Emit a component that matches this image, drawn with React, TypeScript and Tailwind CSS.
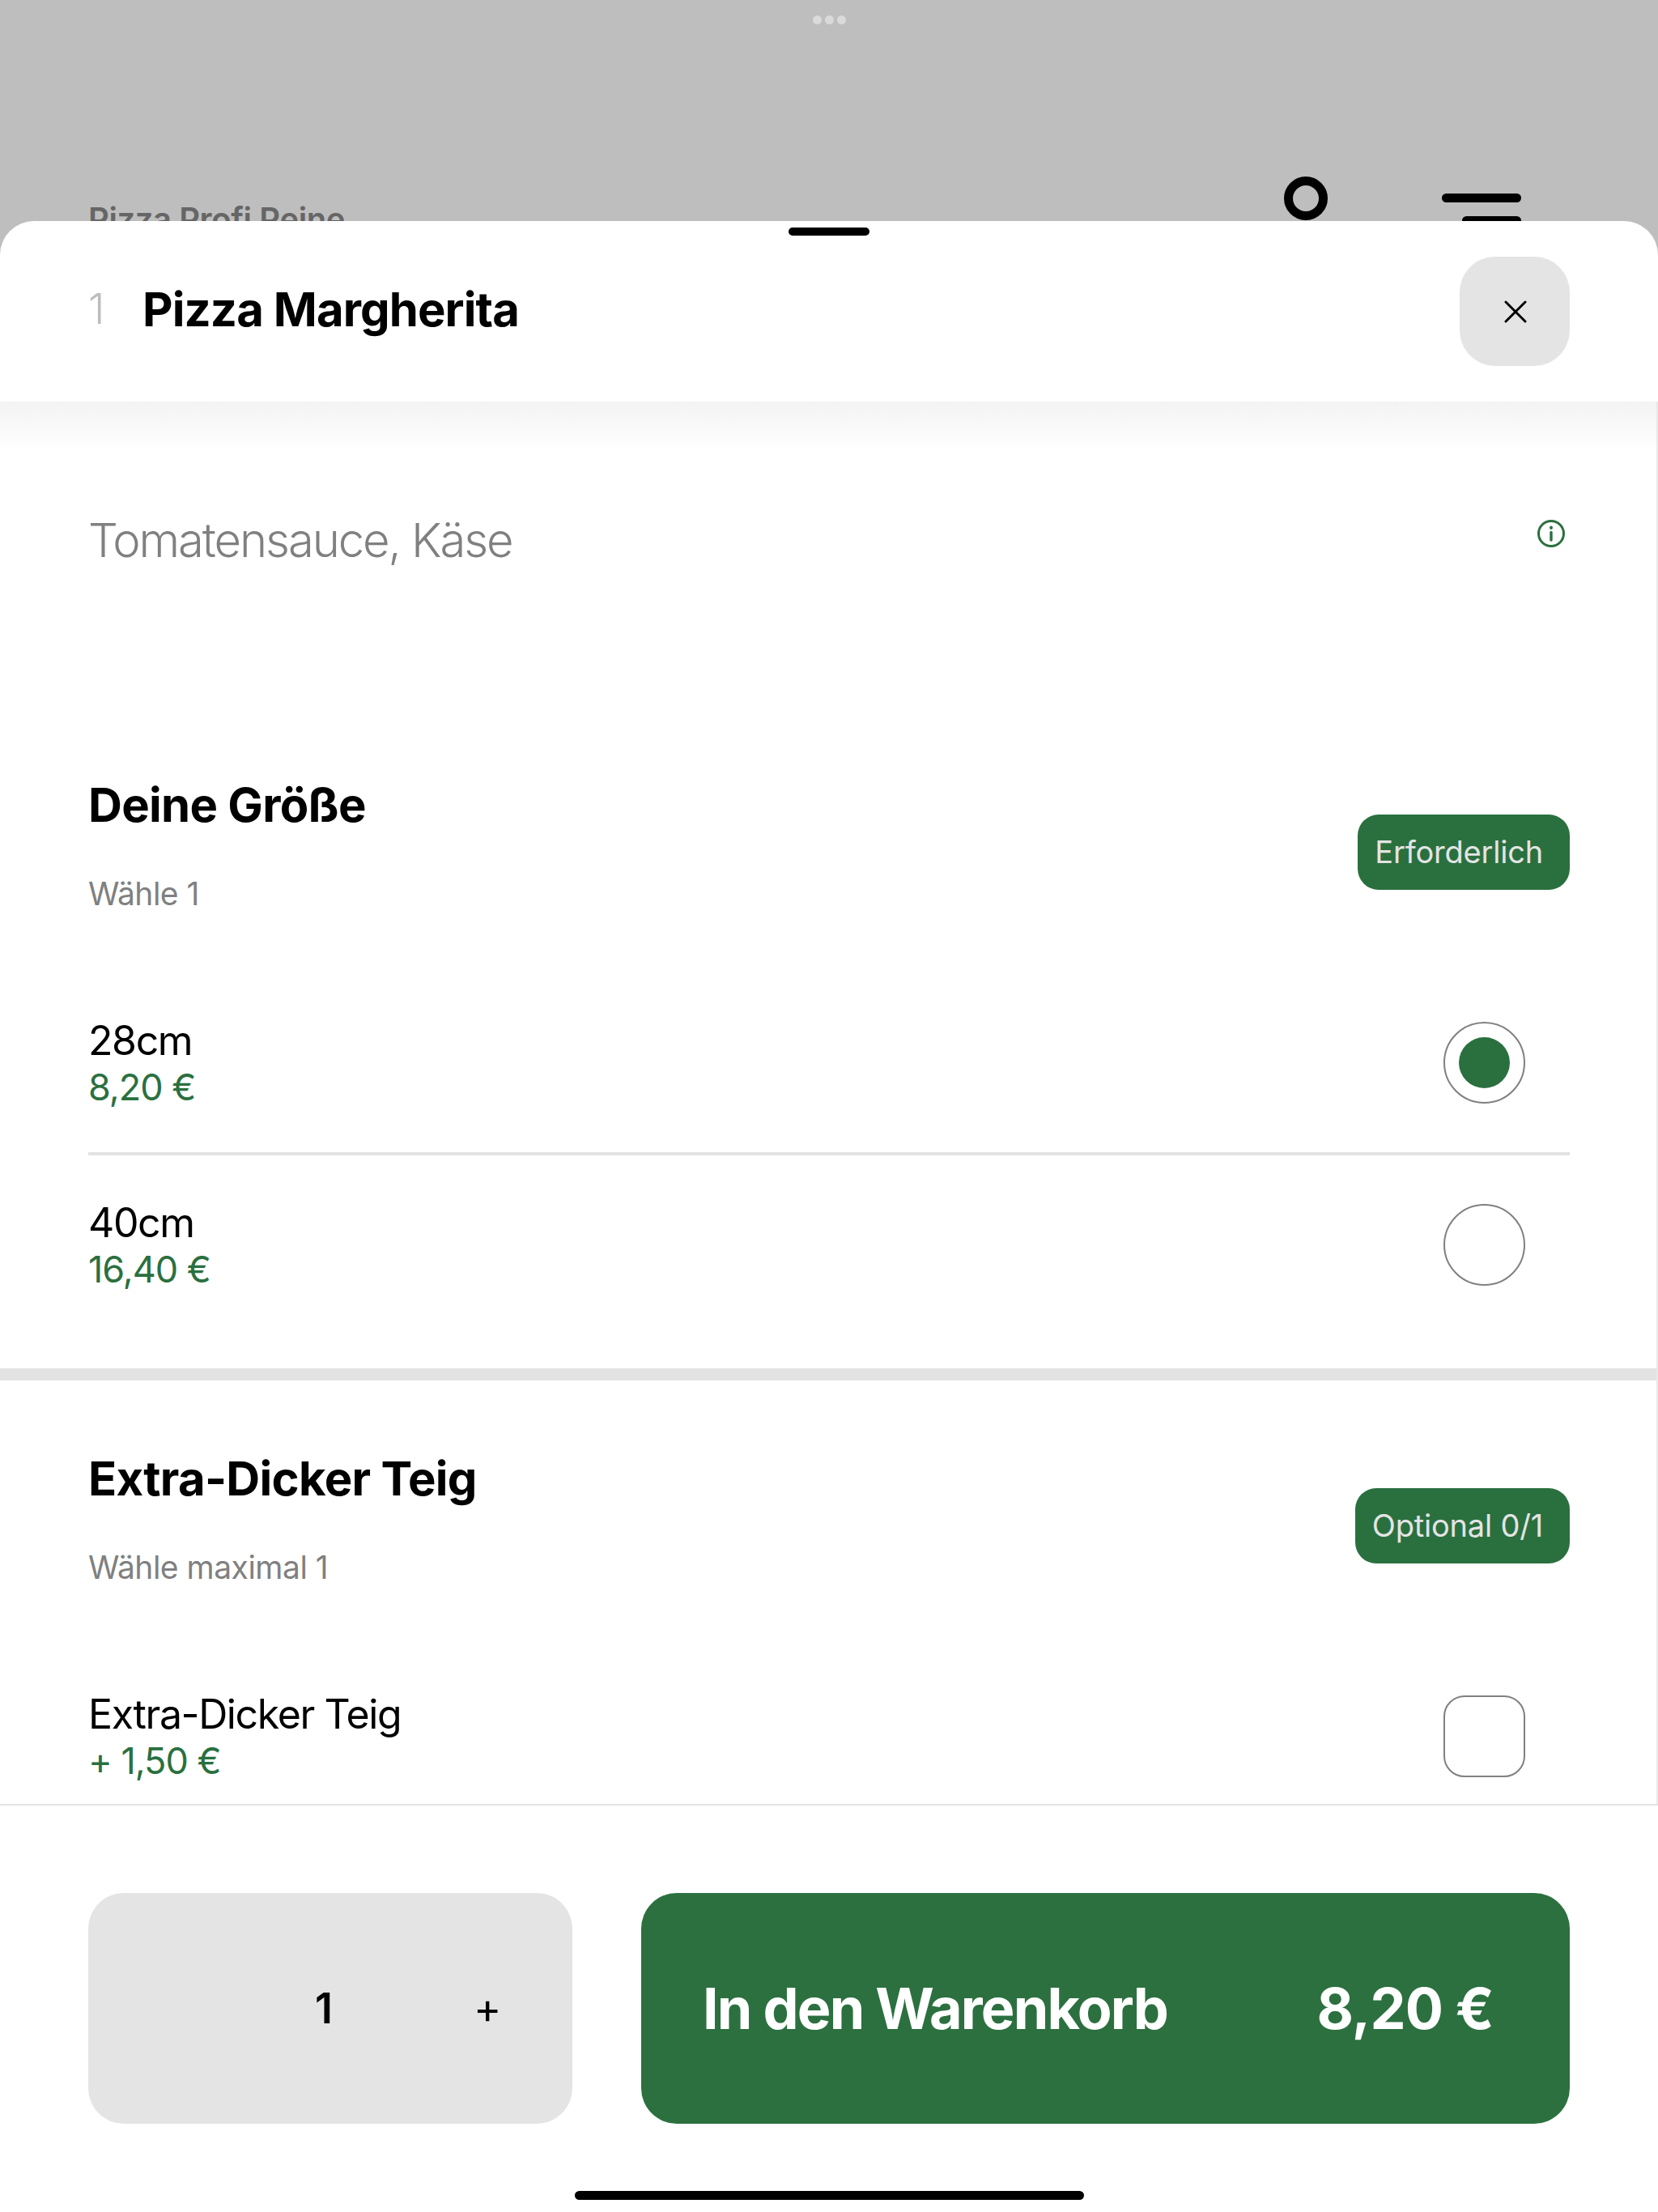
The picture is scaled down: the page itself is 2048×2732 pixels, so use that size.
import React from "react";

const font = { fontFamily: "Inter, 'Liberation Sans', sans-serif" };

function Option({ name, price, control, divider }: { name: string; price: string; control: React.ReactNode; divider?: boolean }) {
  return (
    <div className={`flex items-center justify-between h-[221px] ${divider ? "border-b-4 border-[#e3e3e3] box-content" : ""}`}>
      <div className="pt-[3px]">
        <div className="text-[50px] leading-[58px] tracking-[-1.4px] text-black">{name}</div>
        <div className="text-[45px] leading-[58px] tracking-[-1px] text-[#2a703f]">{price}</div>
      </div>
      <div className="mr-[55px]">{control}</div>
    </div>
  );
}

function Radio({ on }: { on?: boolean }) {
  return (
    <div className="w-[101px] h-[101px] rounded-full border-2 border-[#808080] flex items-center justify-center">
      {on && <div className="w-[63px] h-[63px] rounded-full bg-[#2a703f]" />}
    </div>
  );
}

function SectionHead({ title, sub, badge }: { title: string; sub: string; badge: string }) {
  return (
    <div className="flex items-start justify-between mb-[58px]">
      <div className="h-[185px]">
        <div className="text-[58px] leading-[70px] font-bold tracking-[-0.7px] text-black">{title}</div>
        <div className="mt-[50px] text-[39px] leading-[50px] tracking-[-0.5px] text-[#808080]">{sub}</div>
      </div>
      <div className="mt-[47px] h-[93px] pl-[21px] pr-[33px] flex items-center rounded-[26px] bg-[#2a703f] text-[38px] text-[#e4e4e4] tracking-[-0.2px]">{badge}</div>
    </div>
  );
}

export default function App() {
  return (
    <div style={font} className="w-[2048px] h-[2732px] flex flex-col bg-[#bebebe] overflow-hidden">
      <div className="h-[273px] shrink-0 overflow-hidden">
        <div className="flex justify-center gap-[4px] pt-[19px]">
          <div className="w-[11px] h-[11px] rounded-full bg-[#dadada]" />
          <div className="w-[11px] h-[11px] rounded-full bg-[#dadada]" />
          <div className="w-[11px] h-[11px] rounded-full bg-[#dadada]" />
        </div>
        <div className="flex items-start justify-between pl-[109px] pr-[169px] pt-[188px]">
          <div className="mt-[28px] text-[40px] leading-[50px] font-semibold tracking-[-0.4px] text-[#666666]">Pizza Profi Peine</div>
          <div className="flex items-start gap-[141px]">
            <div className="w-[54px] h-[54px] rounded-full border-[11px] border-black" />
            <div className="mt-[21px] flex flex-col items-end gap-[17px]">
              <div className="w-[98px] h-[11px] rounded-full bg-black" />
              <div className="w-[73px] h-[11px] rounded-full bg-black" />
            </div>
          </div>
        </div>
      </div>

      <div className="relative flex-1 flex flex-col bg-white rounded-t-[42px] overflow-hidden">
        <div className="absolute top-[8px] left-1/2 -translate-x-1/2 w-[100px] h-[10px] rounded-full bg-black" />

        <div className="h-[223px] shrink-0 flex items-center justify-between pl-[109px] pr-[109px]">
          <div className="flex items-center mt-[-5px]">
            <span className="w-[67px] text-[52px] font-light text-[#bdbdbd]">1</span>
            <span className="text-[58px] leading-[70px] font-bold tracking-[-0.9px] text-black">Pizza Margherita</span>
          </div>
          <div className="w-[136px] h-[135px] rounded-[44px] bg-[#e4e4e4] flex items-center justify-center">
            <svg className="ml-[2px] mt-[1px]" width="28" height="28" viewBox="0 0 28 28" fill="none" stroke="#000" strokeWidth="3" strokeLinecap="round">
              <path d="M2 2 L26 26 M26 2 L2 26" />
            </svg>
          </div>
        </div>

        <div className="relative flex-1 min-h-0 overflow-hidden border-r-2 border-[#e9e9e9]">
          <div className="absolute inset-x-0 top-0 h-[60px] bg-gradient-to-b from-[#f3f3f3] to-white" />
          <div className="relative pl-[109px] pr-[107px] pt-[136px] pb-[257px]">
            <div className="flex items-start justify-between">
              <div className="text-[58px] leading-[70px] tracking-[-2.1px] font-light text-[#808080]">Tomatensauce, Käse</div>
              <svg className="mr-[6px] mt-[10px]" width="34" height="34" viewBox="0 0 34 34" fill="none" stroke="#2a703f" strokeLinecap="round">
                <circle cx="17" cy="17" r="15.5" strokeWidth="3" />
                <path d="M17 15.5 V25" strokeWidth="3.4" />
                <path d="M17 9.5 V10" strokeWidth="3.8" />
              </svg>
            </div>
          </div>

          <div className="relative pl-[109px] pr-[107px] pb-[42px] border-b-[15px] border-[#e3e3e3]">
            <SectionHead title="Deine Größe" sub="Wähle 1" badge="Erforderlich" />
            <Option name="28cm" price="8,20 €" divider control={<Radio on />} />
            <Option name="40cm" price="16,40 €" control={<Radio />} />
          </div>

          <div className="pl-[109px] pr-[107px] pt-[86px]">
            <SectionHead title="Extra-Dicker Teig" sub="Wähle maximal 1" badge="Optional 0/1" />
            <Option name="Extra-Dicker Teig" price="+ 1,50 €" control={<div className="w-[101px] h-[101px] rounded-[26px] border-2 border-[#808080]" />} />
          </div>
        </div>

        <div className="h-[504px] shrink-0 border-t-2 border-[#e3e3e3] pt-[108px] flex flex-col">
          <div className="flex gap-[85px] px-[109px]">
            <div className="w-[598px] h-[285px] rounded-[44px] bg-[#e4e4e4] flex items-center justify-end pr-[92px] gap-[174px] text-black">
              <span className="text-[52px] font-semibold">1</span>
              <span className="text-[52px] w-[30px] text-center">+</span>
            </div>
            <div className="flex-1 h-[285px] rounded-[44px] bg-[#2c7040] flex items-center justify-between pl-[76px] pr-[94px] text-white text-[70px] font-bold tracking-[-1.8px]">
              <span>In den Warenkorb</span>
              <span className="tracking-[-0.8px]">8,20 €</span>
            </div>
          </div>
          <div className="mt-[83px] mx-auto w-[629px] h-[11px] rounded-full bg-black" />
        </div>
      </div>
    </div>
  );
}
